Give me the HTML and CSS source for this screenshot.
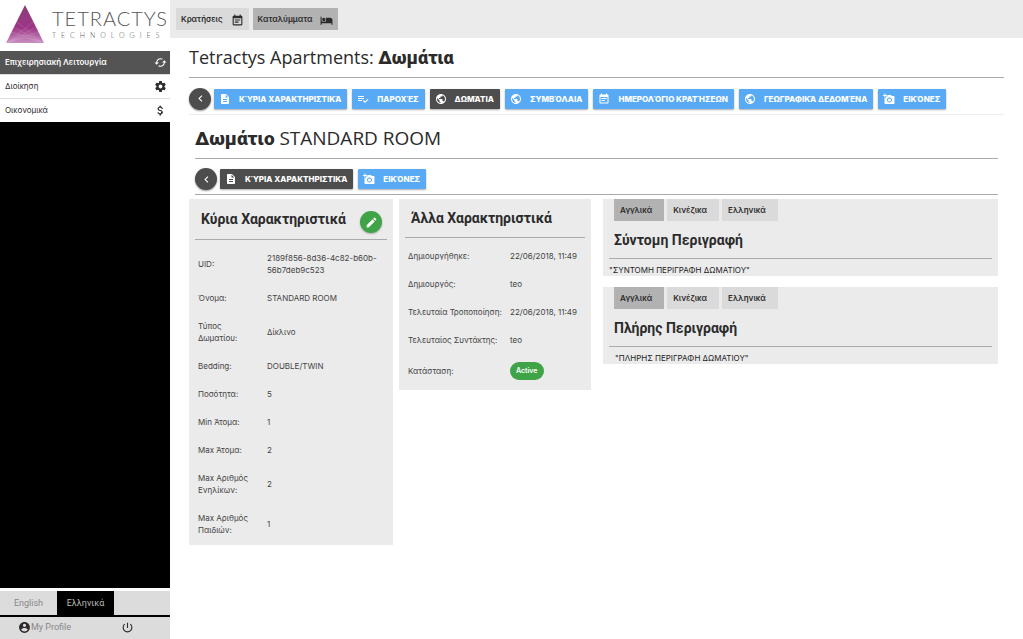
FILE: index.html
```html
<!DOCTYPE html>
<html lang="el">
<head>
<meta charset="utf-8">
<meta name="viewport" content="width=device-width, initial-scale=1">
<title>Tetractys Apartments</title>
<link rel="stylesheet" href="styles.css">
</head>
<body>
<svg class="sprite" aria-hidden="true">
  <symbol id="doc" viewBox="0 0 24 24"><path d="M14 2H6c-1.100 0-2 .9-2 2v16c0 1.100.9 2 2 2h12c1.100 0 2-.9 2-2V8l-6-6zm2 16H8v-2h8v2zm0-4H8v-2h8v2zm-3-5V3.500L18.500 9H13z"/></symbol>
  <symbol id="check" viewBox="0 0 24 24"><path d="M14 10H2v2h12v-2zm0-4H2v2h12V6zM2 16h8v-2H2v2zm19.500-4.500L23 13l-7 7-4.500-4.500L13 14l3 3 5.500-5.500z"/></symbol>
  <symbol id="globe" viewBox="0 0 24 24"><path d="M12 2C6.480 2 2 6.480 2 12s4.480 10 10 10 10-4.480 10-10S17.520 2 12 2zm-1 17.930c-3.950-.49-7-3.850-7-7.930 0-.62.08-1.210.21-1.790L9 15v1c0 1.100.9 2 2 2v1.930zm6.900-2.540c-.26-.81-1-1.390-1.900-1.390h-1v-3c0-.55-.45-1-1-1H8v-2h2c.55 0 1-.45 1-1V7h2c1.100 0 2-.9 2-2v-.41c2.930 1.190 5 4.060 5 7.410 0 2.080-.8 3.970-2.100 5.390z"/></symbol>
  <symbol id="cal" viewBox="0 0 24 24"><path d="M17 10H7v2h10v-2zm2-7h-1V1h-2v2H8V1H6v2H5c-1.110 0-2 .9-2 2v14c0 1.100.89 2 2 2h14c1.100 0 2-.9 2-2V5c0-1.100-.9-2-2-2zm0 16H5V8h14v11zm-5-5H7v2h7v-2z"/></symbol>
  <symbol id="photo" viewBox="0 0 24 24"><path d="M3 4V1h2v3h3v2H5v3H3V6H0V4h3zm3 6V7h3V4h7l1.830 2H21c1.100 0 2 .9 2 2v12c0 1.100-.9 2-2 2H5c-1.100 0-2-.9-2-2V10h3zm7 9c2.760 0 5-2.240 5-5s-2.240-5-5-5-5 2.240-5 5 2.240 5 5 5zm-3.200-5c0 1.770 1.430 3.200 3.200 3.200s3.200-1.430 3.200-3.200-1.430-3.200-3.200-3.200-3.200 1.430-3.200 3.200z"/></symbol>
  <symbol id="left" viewBox="0 0 24 24"><path d="M15.410 7.410L14 6l-6 6 6 6 1.410-1.410L10.830 12z"/></symbol>
  <symbol id="bed" viewBox="0 0 24 24"><path d="M7 13c1.660 0 3-1.340 3-3S8.660 7 7 7s-3 1.340-3 3 1.340 3 3 3zm12-6h-8v7H3V5H1v15h2v-3h18v3h2v-9c0-2.210-1.790-4-4-4z"/></symbol>
  <symbol id="edit" viewBox="0 0 24 24"><path d="M3 17.250V21h3.750L17.810 9.940l-3.750-3.750L3 17.250zM20.710 7.040c.39-.39.39-1.020 0-1.410l-2.340-2.340c-.39-.39-1.020-.39-1.410 0l-1.830 1.830 3.750 3.750 1.830-1.830z"/></symbol>
  <symbol id="gear" viewBox="0 0 24 24"><path d="M19.430 12.980c.04-.32.07-.64.07-.98s-.03-.66-.07-.98l2.110-1.650c.19-.15.24-.42.12-.64l-2-3.460c-.12-.22-.39-.3-.61-.22l-2.490 1c-.52-.4-1.080-.73-1.690-.98l-.38-2.650C14.460 2.180 14.250 2 14 2h-4c-.25 0-.46.18-.49.42l-.38 2.650c-.61.25-1.170.59-1.690.98l-2.490-1c-.23-.09-.49 0-.61.22l-2 3.460c-.13.22-.07.49.12.64l2.110 1.650c-.04.32-.07.65-.07.98s.03.66.07.98l-2.110 1.650c-.19.15-.24.42-.12.64l2 3.460c.12.22.39.3.61.22l2.490-1c.52.4 1.080.73 1.690.98l.38 2.650c.03.24.24.42.49.42h4c.25 0 .46-.18.49-.42l.38-2.650c.61-.25 1.170-.59 1.690-.98l2.490 1c.23.09.49 0 .61-.22l2-3.460c.12-.22.07-.49-.12-.64l-2.110-1.650zM12 15.500c-1.930 0-3.500-1.570-3.500-3.500s1.570-3.500 3.500-3.500 3.500 1.570 3.500 3.500-1.570 3.500-3.500 3.500z"/></symbol>
  <symbol id="dollar" viewBox="0 0 24 24"><path d="M11.800 10.900c-2.270-.59-3-1.200-3-2.150 0-1.090 1.010-1.850 2.700-1.850 1.780 0 2.440.85 2.500 2.100h2.210c-.07-1.720-1.120-3.300-3.210-3.810V3h-3v2.160c-1.940.42-3.500 1.680-3.500 3.610 0 2.310 1.910 3.460 4.700 4.130 2.500.6 3 1.480 3 2.410 0 .69-.49 1.790-2.700 1.790-2.060 0-2.870-.92-2.980-2.100h-2.200c.12 2.190 1.760 3.420 3.680 3.830V21h3v-2.150c1.950-.37 3.500-1.500 3.500-3.550 0-2.840-2.430-3.810-4.700-4.400z"/></symbol>
  <symbol id="loop" viewBox="0 0 24 24"><path d="M19 8l-4 4h3c0 3.310-2.690 6-6 6-1.010 0-1.970-.25-2.800-.7l-1.460 1.460C8.970 19.540 10.430 20 12 20c4.420 0 8-3.580 8-8h3l-4-4zM6 12c0-3.310 2.690-6 6-6 1.010 0 1.970.25 2.800.7l1.460-1.460C15.030 4.460 13.570 4 12 4c-4.420 0-8 3.580-8 8H1l4 4 4-4H6z"/></symbol>
  <symbol id="person" viewBox="0 0 24 24"><path d="M12 2C6.480 2 2 6.480 2 12s4.480 10 10 10 10-4.480 10-10S17.520 2 12 2zm0 3c1.660 0 3 1.340 3 3s-1.340 3-3 3-3-1.340-3-3 1.340-3 3-3zm0 14.200c-2.500 0-4.710-1.280-6-3.220.03-1.990 4-3.080 6-3.080 1.990 0 5.970 1.090 6 3.080-1.290 1.940-3.500 3.220-6 3.220z"/></symbol>
  <symbol id="power" viewBox="0 0 24 24"><path d="M13 3h-2v10h2V3zm4.830 2.170l-1.420 1.420C17.990 7.860 19 9.810 19 12c0 3.870-3.130 7-7 7s-7-3.130-7-7c0-2.190 1.010-4.140 2.580-5.420L6.170 5.170C4.230 6.820 3 9.260 3 12c0 4.970 4.030 9 9 9s9-4.030 9-9c0-2.740-1.230-5.180-3.170-6.830z"/></symbol>
</svg>
<div class="app">
  <aside class="side">
    <div class="logo">
      <svg class="mark" viewBox="0 0 38 39" aria-hidden="true">
        <defs><linearGradient id="g" x1="0" y1="0" x2="0" y2="1"><stop offset="0" stop-color="#8b3f78"/><stop offset=".6" stop-color="#9c3586"/><stop offset="1" stop-color="#c98fc0"/></linearGradient></defs>
        <path d="M19 0L38 38H0z" fill="url(#g)"/>
        <path d="M2 37L27 17M4 37l26-15M0 38l33-11M36 37L11 17M34 37L8 22M38 38L5 27M3 37q16-14 32 0M7 37q12-8 24 0" fill="none" stroke="#fff" stroke-opacity=".2" stroke-width=".6"/>
      </svg>
      <div class="brand"><span class="brand-name">TETRACTYS</span><span class="brand-sub">TECHNOLOGIES</span></div>
    </div>
    <nav class="menu">
      <a class="active" href="#">Επιχειρησιακή Λειτουργία<svg><use href="#loop"/></svg></a>
      <a href="#">Διοίκηση<svg><use href="#gear"/></svg></a>
      <a href="#">Οικονομικά<svg><use href="#dollar"/></svg></a>
    </nav>
    <div class="fill"></div>
    <div class="langs"><button>English</button><button class="active">Ελληνικά</button></div>
    <div class="profile"><a href="#"><svg><use href="#person"/></svg>My Profile</a><button aria-label="Logout"><svg><use href="#power"/></svg></button></div>
  </aside>
  <div class="page">
    <header class="top">
      <button class="tab">Κρατήσεις<svg><use href="#cal"/></svg></button>
      <button class="tab active">Καταλύμματα<svg><use href="#bed"/></svg></button>
    </header>
    <main class="main">
      <h1 class="title"><span class="latin">Tetractys Apartments:</span> <b>Δωμάτια</b></h1>
      <div class="bar">
        <button class="back" aria-label="Back"><svg><use href="#left"/></svg></button>
        <button class="btn"><svg><use href="#doc"/></svg>ΚΎΡΙΑ ΧΑΡΑΚΤΗΡΙΣΤΙΚΆ</button>
        <button class="btn"><svg><use href="#check"/></svg>ΠΑΡΟΧΈΣ</button>
        <button class="btn active"><svg><use href="#globe"/></svg>ΔΩΜΆΤΙΑ</button>
        <button class="btn"><svg><use href="#globe"/></svg>ΣΥΜΒΌΛΑΙΑ</button>
        <button class="btn"><svg><use href="#cal"/></svg>ΗΜΕΡΟΛΌΓΙΟ ΚΡΑΤΉΣΕΩΝ</button>
        <button class="btn"><svg><use href="#globe"/></svg>ΓΕΩΓΡΑΦΙΚΆ ΔΕΔΟΜΈΝΑ</button>
        <button class="btn"><svg><use href="#photo"/></svg>ΕΙΚΌΝΕΣ</button>
      </div>
      <section class="room">
        <h2 class="title"><b>Δωμάτιο</b> <span class="latin">STANDARD ROOM</span></h2>
        <div class="bar">
          <button class="back" aria-label="Back"><svg><use href="#left"/></svg></button>
          <button class="btn active"><svg><use href="#doc"/></svg>ΚΎΡΙΑ ΧΑΡΑΚΤΗΡΙΣΤΙΚΆ</button>
          <button class="btn"><svg><use href="#photo"/></svg>ΕΙΚΌΝΕΣ</button>
        </div>
      </section>
      <div class="cards">
        <section class="card main-card">
          <div class="card-head"><h3>Κύρια Χαρακτηριστικά</h3><button class="edit" aria-label="Edit"><svg><use href="#edit"/></svg></button></div>
          <table>
            <tr><th>UID:</th><td>2189f856-8d36-4c82-b60b-56b7deb9c523</td></tr>
            <tr><th>Όνομα:</th><td>STANDARD ROOM</td></tr>
            <tr><th>Τύπος Δωματίου:</th><td>Δίκλινο</td></tr>
            <tr><th>Bedding:</th><td>DOUBLE/TWIN</td></tr>
            <tr><th>Ποσότητα:</th><td>5</td></tr>
            <tr><th>Min Άτομα:</th><td>1</td></tr>
            <tr><th>Max Άτομα:</th><td>2</td></tr>
            <tr><th>Max Αριθμός Ενηλίκων:</th><td>2</td></tr>
            <tr><th>Max Αριθμός Παιδιών:</th><td>1</td></tr>
          </table>
        </section>
        <section class="card other-card">
          <div class="card-head"><h3>Άλλα Χαρακτηριστικά</h3></div>
          <table>
            <tr><th>Δημιουργήθηκε:</th><td>22/06/2018, 11:49</td></tr>
            <tr><th>Δημιουργός:</th><td>teo</td></tr>
            <tr><th>Τελευταία Τροποποίηση:</th><td>22/06/2018, 11:49</td></tr>
            <tr><th>Τελευταίος Συντάκτης:</th><td>teo</td></tr>
            <tr><th>Κατάσταση:</th><td><span class="status">Active</span></td></tr>
          </table>
        </section>
        <div class="texts">
          <section class="card text-card">
            <div class="tabs"><button class="tab active">Αγγλικά</button><button class="tab">Κινέζικα</button><button class="tab">Ελληνικά</button></div>
            <h3>Σύντομη Περιγραφή</h3>
            <p>"ΣΥΝΤΟΜΗ ΠΕΡΙΓΡΑΦΗ ΔΩΜΑΤΙΟΥ"</p>
          </section>
          <section class="card text-card full">
            <div class="tabs"><button class="tab active">Αγγλικά</button><button class="tab">Κινέζικα</button><button class="tab">Ελληνικά</button></div>
            <h3>Πλήρης Περιγραφή</h3>
            <p>"ΠΛΗΡΗΣ ΠΕΡΙΓΡΑΦΗ ΔΩΜΑΤΙΟΥ"</p>
          </section>
        </div>
      </div>
    </main>
  </div>
</div>
</body>
</html>
```
FILE: styles.css
```css
* { box-sizing: border-box; }
body { margin: 0; background: #fff; color: #2b2b2b; font-family: Roboto, "Noto Sans", sans-serif; font-size: 8px; line-height: 12px; }
button { border: 0; padding: 0; font: inherit; color: inherit; cursor: pointer; }
a { color: inherit; text-decoration: none; }
h1, h2, h3, p { margin: 0; }
svg { fill: currentColor; flex: none; }
.sprite { display: none; }
.app { display: flex; min-height: 100vh; }

.side { width: 170px; flex: none; display: flex; flex-direction: column; }
.logo { height: 51px; display: flex; align-items: center; gap: 8px; padding: 0 4px 3px 6px; }
.mark { width: 38px; height: 39px; }
.brand { display: flex; flex-direction: column; font-family: Lato, sans-serif; font-weight: 300; color: #555; white-space: nowrap; }
.brand-name { font-size: 20px; line-height: 22px; letter-spacing: 1px; }
.brand-sub { font-size: 7px; line-height: 12px; letter-spacing: 5px; }
.menu a { display: flex; align-items: center; justify-content: space-between; height: 24px; padding: 0 3px 1px 5px; border-bottom: 1px solid #ddd; font-size: 8px; font-family: Inter, sans-serif; }
.menu a:last-child { border-bottom: 0; height: 23px; }
.menu a.active { background: #545454; color: #fff; font-weight: 600; }
.menu svg { width: 13px; height: 13px; }
.fill { flex: 1; background: #000; }
.langs { display: flex; height: 27px; border-top: 3px solid #fff; background: #dcdcdc; }
.langs button { width: 57px; background: none; color: #888; font-size: 9px; }
.langs button.active { background: #000; color: #bbb; }
.profile { display: flex; align-items: center; justify-content: space-between; height: 24px; border-top: 2px solid #000; background: #dcdcdc; padding: 0 36px 2px 18px; }
.profile a { display: flex; align-items: center; color: #888; font-size: 9px; }
.profile button { display: flex; background: none; }
.profile svg { width: 13px; height: 13px; fill: #2b2b2b; }

.page { flex: 1; min-width: 0; }
.top { display: flex; gap: 4px; height: 38px; padding: 8px 6px; background: #ebebeb; }
.tab { background: #dadada; font-family: Inter, sans-serif; font-weight: 600; font-size: 8px; }
.tab.active { background: #b2b2b2; }
.top .tab { display: flex; align-items: center; gap: 8px; padding: 0 5px; }
.top svg { width: 13px; height: 13px; margin-top: 3px; }
.main { padding: 0 19px; }
.title { height: 40px; border-bottom: 1px solid #aaa; font-size: 18px; font-weight: 700; line-height: 38px; }
h2.title { font-size: 19px; }
.latin { font-family: "Open Sans", sans-serif; font-weight: 400; }
.bar { display: flex; align-items: center; gap: 5px; height: 37px; padding-top: 5px; border-bottom: 1px solid #eee; }
.back { display: flex; align-items: center; justify-content: center; width: 22px; height: 22px; border-radius: 50%; background: #4d4d4d; color: #fff; box-shadow: 0 1px 2px #0006; flex: none; margin-right: -2px; }
.back svg { width: 13px; height: 13px; }
.btn { display: flex; align-items: center; gap: 8px; height: 20px; padding: 0 6px 0 5px; border-radius: 1px; background: #58aaf4; color: #fff; font-family: Inter, sans-serif; font-size: 8px; font-weight: 800; white-space: nowrap; box-shadow: 0 1px 2px #0005; }
.btn.active { background: #4d4d4d; }
.btn svg { width: 12px; height: 12px; }
.room { padding: 4px 6px 0; }
.room .bar { height: 36px; border-color: #aaa; }

.cards { display: flex; align-items: flex-start; padding: 4px 6px 0 0; }
.card { background: #ebebeb; }
.main-card { flex: 0 1 204px; padding: 0 6px 1px; margin-right: 6px; }
.other-card { flex: 0 1 192px; padding: 0 6px 2px; margin-right: 12px; }
.texts { flex: 1; display: grid; gap: 11px; }
.card-head { display: flex; align-items: center; justify-content: space-between; height: 39px; border-bottom: 1px solid #aaa; padding: 0 5px 0 6px; }
.main-card .card-head { height: 41px; }
h3 { font-size: 14px; line-height: 20px; font-weight: 700; white-space: nowrap; }
.edit { display: flex; align-items: center; justify-content: center; width: 22px; height: 22px; margin-top: 6px; border-radius: 50%; background: #3fa447; color: #fff; box-shadow: 0 1px 2px #0004; }
.edit svg { width: 13px; height: 13px; }
table { width: 100%; border-collapse: collapse; margin-top: 4px; color: #444; }
th, td { padding: 8px 3px; text-align: left; font-family: Inter, sans-serif; font-weight: 400; font-size: 8px; line-height: 12px; }
.main-card th { width: 69px; }
.main-card td { padding-right: 0; }
.other-card th, .other-card td { white-space: nowrap; }
.other-card th { width: 102px; }
.status { display: inline-block; padding: 3px 6px; border-radius: 9px; background: #3fa447; color: #fff; font-weight: 600; font-size: 7px; }
.text-card { padding: 0 6px; }
.tabs { display: flex; gap: 3px; padding-left: 5px; }
.tabs .tab { height: 22px; padding: 0 12px 0 6px; }
.text-card h3 { height: 38px; border-bottom: 1px solid #aaa; padding-left: 5px; line-height: 38px; }
.text-card p { padding-top: 5px; color: #222; font-family: Inter, sans-serif; }
.full p { padding-left: 6px; }
```
